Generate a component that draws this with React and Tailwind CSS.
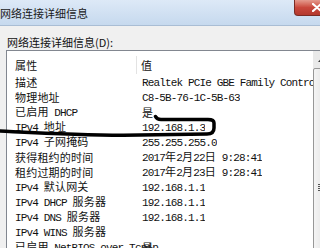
import React from "react";

const rows = [
  ["描述", "Realtek PCIe GBE Family Controller"],
  ["物理地址", "C8-5B-76-1C-5B-63"],
  ["已启用 DHCP", "是"],
  ["IPv4 地址", "192.168.1.3"],
  ["IPv4 子网掩码", "255.255.255.0"],
  ["获得租约的时间", "2017年2月22日 9:28:41"],
  ["租约过期的时间", "2017年2月23日 9:28:41"],
  ["IPv4 默认网关", "192.168.1.1"],
  ["IPv4 DHCP 服务器", "192.168.1.1"],
  ["IPv4 DNS 服务器", "192.168.1.1"],
  ["IPv4 WINS 服务器", ""],
  ["已启用 NetBIOS over Tcpip", "是"],
];

// latin runs in the mono face, CJK runs in the sans face
function Mixed({ text }) {
  return text
    .split(/([\x20-\x7e]+)/)
    .filter(Boolean)
    .map((part, i) =>
      /^[\x20-\x7e]+$/.test(part) ? (
        <span key={i} className="font-['Liberation_Mono'] text-[11px] tracking-[-0.85px]">
          {part}
        </span>
      ) : (
        <span key={i}>{part}</span>
      )
    );
}

function Scrollbar() {
  return (
    <div className="flex w-[17px] shrink-0 flex-col bg-[#e9e9e9]">
      <div className="flex h-[17px] shrink-0 items-center justify-center">
        <svg width="7" height="4" viewBox="0 0 7 4">
          <path d="M0 4 L3.5 0 L7 4 Z" fill="#3c3c3c" />
        </svg>
      </div>
      <div className="flex h-[238px] shrink-0 items-center justify-center rounded-[2px] border border-[#979797] bg-gradient-to-r from-[#f4f4f4] to-[#dedede]">
        <div className="flex w-[8px] flex-col gap-[1px]">
          <span className="h-[1px] bg-[#555]" />
          <span className="h-[1px] bg-[#555]" />
          <span className="h-[1px] bg-[#555]" />
          <span className="h-[1px] bg-[#555]" />
        </div>
      </div>
    </div>
  );
}

export default function App() {
  return (
    <div className="relative h-[248px] w-[320px] overflow-hidden bg-[#f0f0f0] font-['Noto_Sans_CJK_SC',sans-serif] text-[#111]">
      <div className="flex h-full w-[340px] flex-col">
        <div className="flex h-[26px] shrink-0 items-start justify-between border-b border-[#a9bdd4] bg-gradient-to-b from-[#dde9f7] to-[#c6d9ee]">
          <span className="pt-[5px] text-[11px] leading-[16px] text-[#1a1a1a]">网络连接详细信息</span>
          <div className="relative flex h-[16px] w-[46px] items-center justify-center rounded-bl-[4px] border border-t-0 border-[#7a2b24] bg-gradient-to-b from-[#e49a8e] via-[#c9473c] to-[#b3392e]">
            <svg width="10" height="9" viewBox="0 0 10 9">
              <path d="M1 1 L9 8 M9 1 L1 8" stroke="#fff" strokeWidth="2.2" strokeLinecap="round" />
            </svg>
          </div>
        </div>

        <div className="flex min-h-0 flex-1 flex-col">
          <div className="pl-[7px] pt-[8px] text-[11px] leading-[16px]">网络连接详细信息(D):</div>
          <div className="ml-[6px] flex w-[325px] flex-1 border border-[#828790] bg-white">
            <div className="flex w-[306px] shrink-0 flex-col text-[11px] tracking-[0.2px]">
              <div className="flex h-[24px] shrink-0 items-center pt-[4px]">
                <div className="w-[130px] shrink-0 border-r border-[#e3e3e3] pl-[8px] leading-[18px]">属性</div>
                <div className="pl-[4px] leading-[18px]">值</div>
              </div>
              {rows.map(([name, value]) => (
                <div key={name} className="flex h-[15px] shrink-0 items-center whitespace-nowrap leading-[15px]">
                  <div className="w-[131px] shrink-0 pl-[8px]">
                    <Mixed text={name} />
                  </div>
                  <div className="overflow-hidden pl-[4px]">
                    <Mixed text={value} />
                  </div>
                </div>
              ))}
            </div>
            <Scrollbar />
          </div>
        </div>
      </div>

      {/* hand-drawn marker over the IPv4 row */}
      <svg className="pointer-events-none absolute left-0 top-0" width="320" height="248" viewBox="0 0 320 248">
        <path
          d="M0 131 C40 133 90 136 140 135 L207 134 Q214 134 214 128 L214 123 Q214 119.5 208 119.5 L161 119.5 Q157 119.5 155.5 116.5"
          fill="none"
          stroke="#000"
          strokeWidth="3.5"
          strokeLinecap="round"
          strokeLinejoin="round"
        />
      </svg>
    </div>
  );
}
